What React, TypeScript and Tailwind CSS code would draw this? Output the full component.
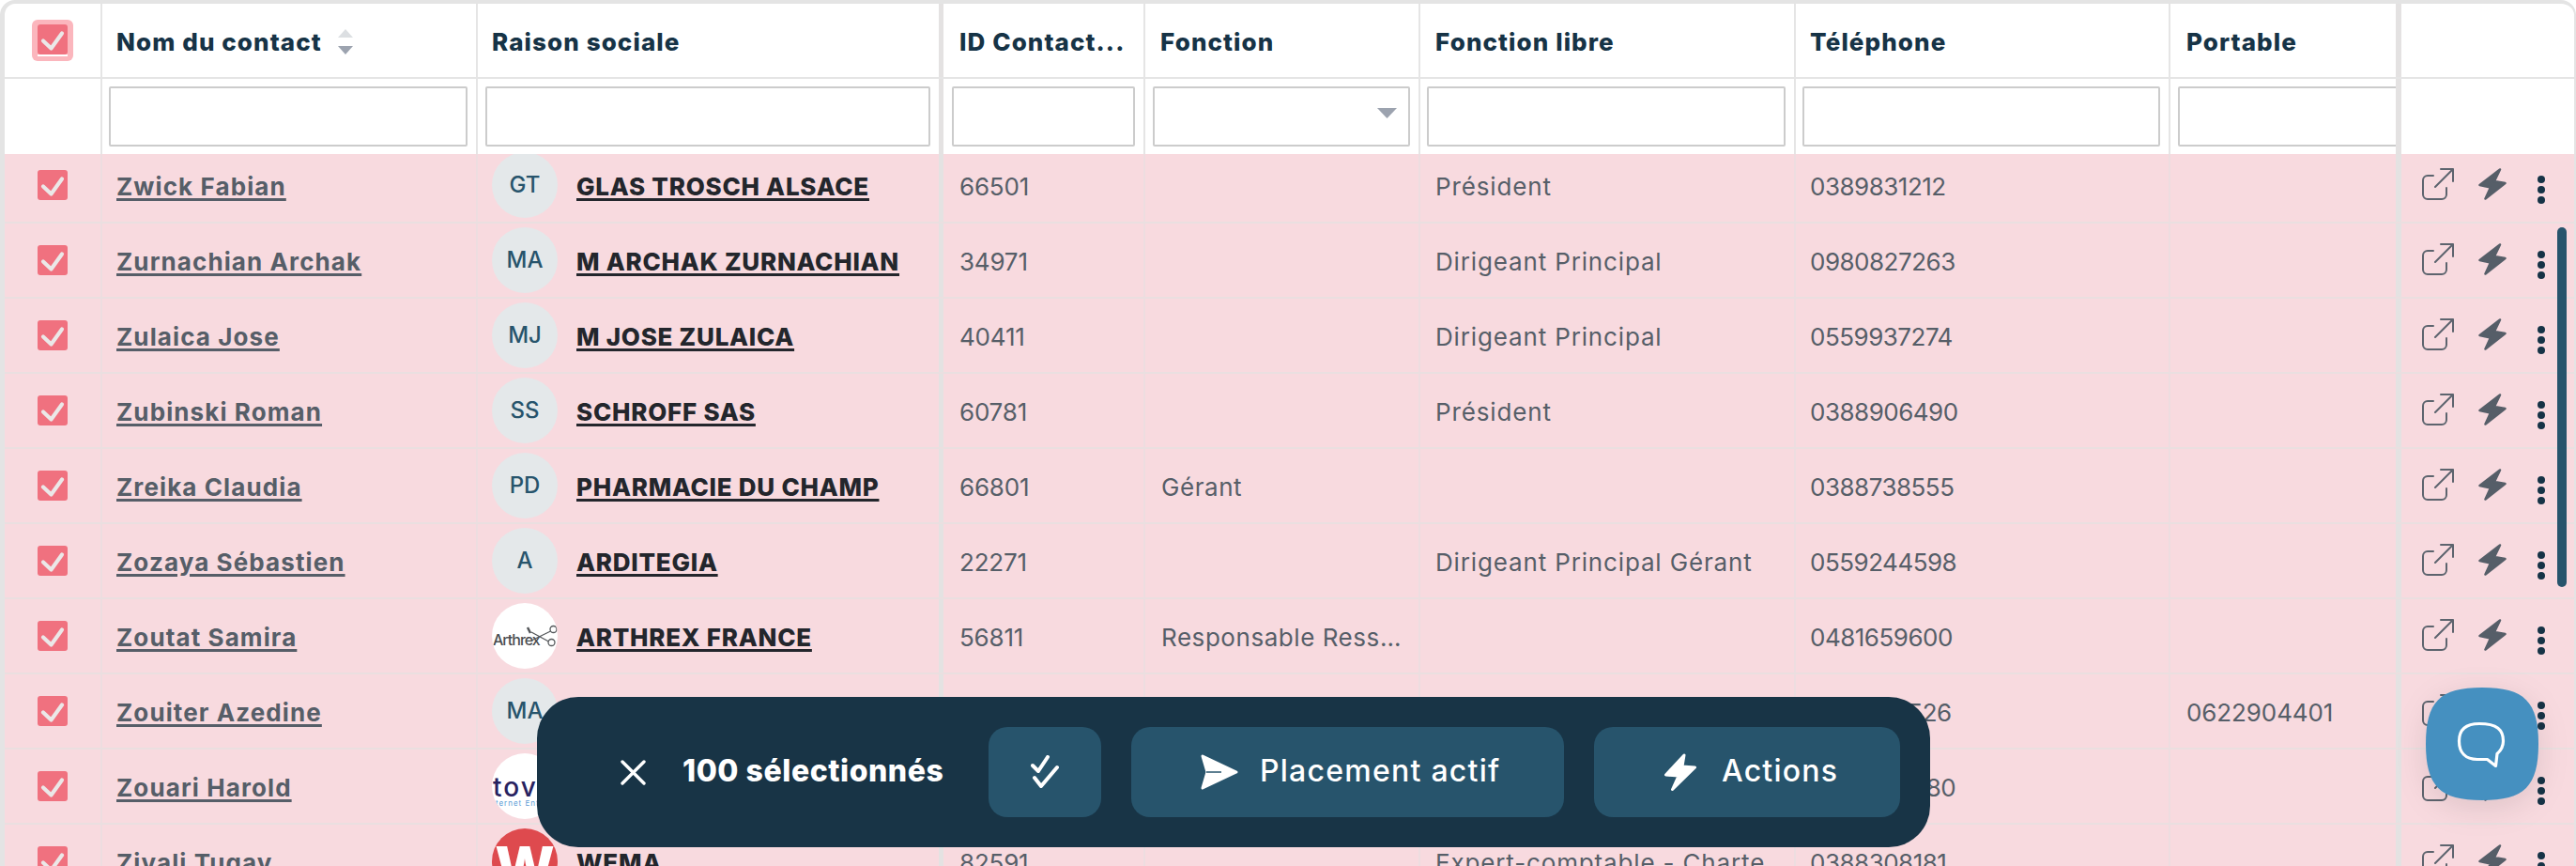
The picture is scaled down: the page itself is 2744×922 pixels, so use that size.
import React from "react";

interface Contact {
    name: string;
    initials?: string;
    logo?: "arthrex" | "tov" | "wema";
    company: string;
    id: string;
    fonction?: string;
    libre?: string;
    tel: string;
    portable?: string;
}

const contacts: Contact[] = [
    { name: "Zwick Fabian", initials: "GT", company: "GLAS TROSCH ALSACE", id: "66501", libre: "Président", tel: "0389831212" },
    { name: "Zurnachian Archak", initials: "MA", company: "M ARCHAK ZURNACHIAN", id: "34971", libre: "Dirigeant Principal", tel: "0980827263" },
    { name: "Zulaica Jose", initials: "MJ", company: "M JOSE ZULAICA", id: "40411", libre: "Dirigeant Principal", tel: "0559937274" },
    { name: "Zubinski Roman", initials: "SS", company: "SCHROFF SAS", id: "60781", libre: "Président", tel: "0388906490" },
    { name: "Zreika Claudia", initials: "PD", company: "PHARMACIE DU CHAMP", id: "66801", fonction: "Gérant", tel: "0388738555" },
    { name: "Zozaya Sébastien", initials: "A", company: "ARDITEGIA", id: "22271", libre: "Dirigeant Principal Gérant", tel: "0559244598" },
    { name: "Zoutat Samira", logo: "arthrex", company: "ARTHREX FRANCE", id: "56811", fonction: "Responsable Ressources Humaines", tel: "0481659600" },
    { name: "Zouiter Azedine", initials: "MA", company: "M AZEDINE ZOUITER", id: "71326", tel: "0388214526", portable: "0622904401" },
    { name: "Zouari Harold", logo: "tov", company: "TOV INTERNET", id: "49120", tel: "0388456780" },
    { name: "Zivali Tugay", logo: "wema", company: "WEMA", id: "82591", libre: "Expert-comptable - Charte", tel: "0388308181" },
];

const Tick = () => (
    <svg width="32" height="32" viewBox="0 0 32 32" fill="none">
        <path d="M6 17.5L14.5 25.5L26 9.5" stroke="#ebe8e8" strokeWidth="4.2" strokeLinecap="round" strokeLinejoin="round" />
    </svg>
);

const RowCheck = () => (
    <span className="flex h-[32px] w-[32px] items-center justify-center rounded-[3px] bg-[#f0717f]">
        <Tick />
    </span>
);

const Avatar = ({ row }: { row: Contact }) => {
    if (row.logo === "arthrex") {
        return (
            <span className="relative flex h-[70px] w-[70px] shrink-0 items-center overflow-hidden rounded-full bg-white">
                <span className="mt-[7px] pl-[1px] text-[16px] font-medium tracking-[-1px] text-[#4a4d50]">Arthrex</span>
                <svg className="absolute left-0 top-0" width="70" height="70" viewBox="0 0 70 70" fill="none" stroke="#55585b" strokeWidth="1.3">
                    <circle cx="65.500" cy="28" r="3.500" />
                    <circle cx="63.500" cy="42" r="3.500" />
                    <path d="M62.500 30L42 40M60.500 41L42 31" />
                    <path d="M38 26L41 32" strokeWidth="2.500" />
                </svg>
            </span>
        );
    }
    if (row.logo === "tov") {
        return (
            <span className="flex h-[70px] w-[70px] shrink-0 flex-col overflow-hidden rounded-full bg-white pl-[1px] pt-[22px]">
                <span className="text-[28px] font-medium leading-[28px] tracking-[2px] text-[#28225f]">tov</span>
                <span className="-ml-[6px] -mt-[2px] whitespace-nowrap text-[8px] leading-[10px] tracking-[1px] text-[#5b9bd5]">Internet Entreprise</span>
            </span>
        );
    }
    if (row.logo === "wema") {
        return (
            <span className="flex h-[70px] w-[70px] shrink-0 items-center justify-center overflow-hidden rounded-full bg-[#de4a4e] pt-[12px]">
                <span className="text-[60px] font-extrabold leading-none text-white">W</span>
            </span>
        );
    }
    return (
        <span className="flex h-[70px] w-[70px] shrink-0 items-center justify-center rounded-full bg-[#e4e8ea] text-[24px] font-medium text-[#27546c]">
            {row.initials}
        </span>
    );
};

const Row = ({ row, first }: { row: Contact; first?: boolean }) => {
    const cell = "flex h-full items-center whitespace-nowrap border-r-2 border-[#eddde0] pt-[3px] text-[26px] text-[#565e68]";
    return (
        <div className={`flex h-[80px] border-b-2 border-[#eadfe0] bg-[#f8dadf] ${first ? "-mt-[6px]" : ""}`}>
            <div className="flex h-full w-[104px] items-center justify-center border-r-2 border-[#eddde0]">
                <RowCheck />
            </div>
            <div className={`${cell} w-[400px] pl-[15px]`}>
                <a className="font-bold tracking-[1.1px] underline decoration-[3px] underline-offset-[3px]">{row.name}</a>
            </div>
            <div className="flex h-full w-[496px] items-center border-r-[5px] border-[#e4e2e2] pl-[15px]">
                <Avatar row={row} />
                <a className="ml-[20px] mt-[3px] whitespace-nowrap text-[26px] font-extrabold tracking-[0.75px] text-[#23262c] underline decoration-[3px] underline-offset-[3px]">
                    {row.company}
                </a>
            </div>
            <div className={`${cell} w-[215px] pl-[17px] tracking-[-0.2px]`}>{row.id}</div>
            <div className={`${cell} w-[293px] pl-[17px] tracking-[0.55px]`}>
                <span className="block w-[258px] truncate">{row.fonction}</span>
            </div>
            <div className={`${cell} w-[400px] pl-[16px] tracking-[0.85px]`}>{row.libre}</div>
            <div className={`${cell} w-[399px] pl-[15px] tracking-[-0.5px]`}>{row.tel}</div>
            <div className="flex h-full w-[240px] items-center whitespace-nowrap pl-[17px] pt-[3px] text-[26px] tracking-[-0.1px] text-[#565e68]">{row.portable}</div>
            <div className="flex h-full w-[190px] items-center border-l-[6px] border-[#e4e2e2] pl-[22px]">
                <svg className="h-[34px] w-[34px] shrink-0 -translate-y-[1px]" viewBox="1 1 34 34" fill="none" stroke="#5d646e" strokeWidth="2">
                    <path d="M13 9H7a5 5 0 0 0-5 5v15a5 5 0 0 0 5 5h15a5 5 0 0 0 5-5v-7" strokeLinecap="round" />
                    <path d="M15 21L34 2M21 2h13v13" strokeLinecap="round" strokeLinejoin="round" />
                </svg>
                <svg className="ml-[26px] h-[34px] w-[30px] shrink-0 -translate-y-[1px]" viewBox="0 0 30 34" fill="#565e68" stroke="#565e68" strokeWidth="2.500" strokeLinejoin="round">
                    <path d="M23 1.500L1.500 18L13 20.500L7.500 32.500L28.500 16L17 14Z" />
                </svg>
                <span className="ml-[33px] mt-[10px] flex flex-col gap-[3px]">
                    <span className="h-[8px] w-[8px] rounded-full bg-[#163346]" />
                    <span className="h-[8px] w-[8px] rounded-full bg-[#163346]" />
                    <span className="h-[8px] w-[8px] rounded-full bg-[#163346]" />
                </span>
            </div>
        </div>
    );
};

const HeaderCell = ({ label, className }: { label?: string; className: string }) => (
    <div className={`flex h-full items-center whitespace-nowrap border-r-2 border-[#e5e5e5] pt-[2px] text-[26px] font-extrabold tracking-[1.1px] text-[#163346] ${className}`}>
        {label}
    </div>
);

const FilterInput = () => (
    <input className="h-[64px] w-full rounded-[2px] border-2 border-[#cccccc] bg-white" />
);

export default function App() {
    return (
        <div className="relative h-[922px] w-[2744px] overflow-hidden bg-white font-['Inter',sans-serif]">
            <div className="flex h-full flex-col overflow-hidden rounded-t-[16px] border-x-[5px] border-t-4 border-r-2 border-x-[#e4e4e4] border-t-[#e4e4e4] bg-white">
                <div className="flex h-[80px] shrink-0 border-b-2 border-[#e5e5e5]">
                    <div className="flex h-full w-[104px] items-center justify-center border-r-2 border-[#e5e5e5]">
                        <span className="flex h-[44px] w-[44px] items-center justify-center rounded-[6px] bg-[#fbb6bd]">
                            <span className="flex -translate-y-[1px] shadow-[0_2px_0_#ffffff]">
                                <RowCheck />
                            </span>
                        </span>
                    </div>
                    <div className="flex h-full w-[400px] items-center border-r-2 border-[#e5e5e5] pl-[15px] pt-[2px] text-[26px] font-extrabold tracking-[1.1px] text-[#163346]">
                        Nom du contact
                        <svg className="ml-[16px]" width="18" height="27" viewBox="0 0 18 27">
                            <path d="M9 0L17 9H1Z" fill="#dcdfe2" />
                            <path d="M9 27L1 18H17Z" fill="#9ca3af" />
                        </svg>
                    </div>
                    <div className="flex h-full w-[496px] items-center border-r-[5px] border-[#e4e2e2] pl-[15px] pt-[2px] text-[26px] font-extrabold tracking-[1.1px] text-[#163346]">
                        Raison sociale
                    </div>
                    <HeaderCell label="ID Contact..." className="w-[215px] pl-[17px]" />
                    <HeaderCell label="Fonction" className="w-[293px] pl-[16px]" />
                    <HeaderCell label="Fonction libre" className="w-[400px] pl-[16px]" />
                    <HeaderCell label="Téléphone" className="w-[399px] pl-[15px]" />
                    <div className="flex h-full w-[240px] items-center whitespace-nowrap pl-[17px] pt-[2px] text-[26px] font-extrabold tracking-[1.1px] text-[#163346]">Portable</div>
                    <div className="h-full w-[190px] border-l-[6px] border-[#e4e2e2]" />
                </div>
                <div className="flex h-[80px] shrink-0">
                    <div className="h-full w-[104px] border-r-2 border-[#e5e5e5]" />
                    <div className="h-full w-[400px] border-r-2 border-[#e5e5e5] pl-[7px] pr-[9px] pt-[8px]"><FilterInput /></div>
                    <div className="h-full w-[496px] border-r-[5px] border-[#e4e2e2] pl-[8px] pr-[9px] pt-[8px]"><FilterInput /></div>
                    <div className="h-full w-[215px] border-r-2 border-[#e5e5e5] pl-[9px] pr-[9px] pt-[8px]"><FilterInput /></div>
                    <div className="relative h-full w-[293px] border-r-2 border-[#e5e5e5] pl-[8px] pr-[9px] pt-[8px]">
                        <FilterInput />
                        <svg className="absolute left-[247px] top-[31px]" width="21" height="11" viewBox="0 0 21 11">
                            <path d="M0 0H21L10.500 11Z" fill="#9ca3af" />
                        </svg>
                    </div>
                    <div className="h-full w-[400px] border-r-2 border-[#e5e5e5] pl-[7px] pr-[9px] pt-[8px]"><FilterInput /></div>
                    <div className="h-full w-[399px] border-r-2 border-[#e5e5e5] pl-[7px] pr-[9px] pt-[8px]"><FilterInput /></div>
                    <div className="h-full w-[240px] overflow-hidden pl-[8px] pt-[8px]">
                        <div className="w-[380px]"><FilterInput /></div>
                    </div>
                    <div className="h-full w-[190px] border-l-[6px] border-[#e4e2e2]" />
                </div>
                <div className="min-h-0 flex-1 overflow-hidden">
                    {contacts.map((row, i) => (
                        <Row key={row.name} row={row} first={i === 0} />
                    ))}
                </div>
            </div>

            {/* scrollbar */}
            <div className="absolute left-[2724px] top-[242px] h-[383px] w-[10px] rounded-full bg-[#27546c]" />

            {/* selection bar */}
            <div className="absolute left-[572px] top-[742px] flex h-[160px] w-[1484px] items-center rounded-[44px] bg-[#183446] pl-[89px]">
                <svg className="shrink-0" width="27" height="27" viewBox="0 0 27 27" fill="none" stroke="#ffffff" strokeWidth="3.4" strokeLinecap="round">
                    <path d="M2 2L25 25M25 2L2 25" />
                </svg>
                <span className="ml-[39px] -mt-[2px] w-[278px] whitespace-nowrap text-[32px] font-extrabold tracking-[0.55px] text-white">100 sélectionnés</span>
                <button className="ml-[48px] flex h-[96px] w-[120px] items-center justify-center rounded-[20px] bg-[#27546c]">
                    <svg width="30" height="36" viewBox="0 0 30 36" fill="none" stroke="#ffffff" strokeWidth="4" strokeLinecap="round" strokeLinejoin="round">
                        <path d="M2 11L8 17L18 2" />
                        <path d="M4 24L11 33L28 13" />
                    </svg>
                </button>
                <button className="ml-[32px] flex h-[96px] w-[461px] items-center rounded-[20px] bg-[#27546c] pl-[74px] text-[32px] font-medium tracking-[1.25px] text-white">
                    <svg className="shrink-0" width="40" height="38" viewBox="0 0 40 38">
                        <path d="M2 2L38 19L2 36L7 19Z" fill="#ffffff" stroke="#ffffff" strokeWidth="3" strokeLinejoin="round" />
                        <path d="M6 19H22" stroke="#27546c" strokeWidth="1.500" />
                    </svg>
                    <span className="ml-[23px] -mt-[2px] whitespace-nowrap">Placement actif</span>
                </button>
                <button className="ml-[32px] flex h-[96px] w-[326px] items-center rounded-[20px] bg-[#27546c] pl-[75px] text-[32px] font-medium tracking-[1.2px] text-white">
                    <svg className="shrink-0" width="34" height="40" viewBox="0 0 34 40" fill="#ffffff" stroke="#ffffff" strokeWidth="3" strokeLinejoin="round">
                        <path d="M21 2L1.500 23L15 24L8.500 38.500L32.500 15L19 14Z" />
                    </svg>
                    <span className="ml-[27px] -mt-[2px] whitespace-nowrap">Actions</span>
                </button>
            </div>

            {/* chat launcher */}
            <svg className="absolute left-[2584px] top-[732px] drop-shadow-[0_8px_16px_rgba(0,0,0,0.1)]" width="120" height="120" viewBox="0 0 120 120">
                <path d="M60 0C105 0 120 15 120 60C120 105 105 120 60 120C15 120 0 105 0 60C0 15 15 0 60 0Z" fill="#4590c0" />
                <path d="M57 38.500C76 38.500 82.500 45 82.500 57C82.500 63 80 67 76 70.500L74.500 83.500L65.500 76.500L55 76.500C42 76.500 35.500 69 35.500 57C35.500 45 42 38.500 57 38.500Z" fill="none" stroke="#ffffff" strokeWidth="3.200" strokeLinejoin="round" />
            </svg>
        </div>
    );
}
